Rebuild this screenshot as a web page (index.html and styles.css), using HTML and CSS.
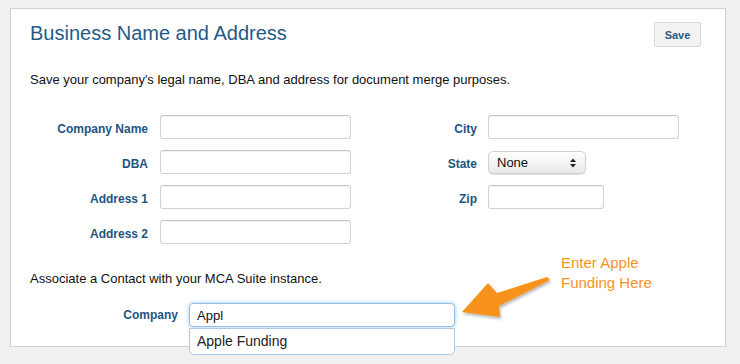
FILE: index.html
```html
<!DOCTYPE html>
<html lang="en">
<head>
<meta charset="utf-8">
<title>Business Name and Address</title>
<link rel="stylesheet" href="styles.css">
</head>
<body>
<div class="card">
  <div class="header">
    <h1 class="title">Business Name and Address</h1>
    <button class="btn-save" type="button">Save</button>
  </div>
  <p class="desc">Save your company's legal name, DBA and address for document merge purposes.</p>

  <div class="form-grid">
    <div class="col col-left">
      <label class="lbl">Company Name</label>
      <input class="txt" type="text">
      <label class="lbl">DBA</label>
      <input class="txt" type="text">
      <label class="lbl">Address 1</label>
      <input class="txt" type="text">
      <label class="lbl">Address 2</label>
      <input class="txt" type="text">
    </div>
    <div class="col col-right">
      <label class="lbl">City</label>
      <input class="txt" type="text">
      <label class="lbl">State</label>
      <div class="select-wrap">
        <select class="sel"><option>None</option></select>
        <svg class="sel-arrows" width="6" height="10" viewBox="0 0 6 10" aria-hidden="true">
          <polygon points="0,4 3,0.5 6,4" fill="#222"/>
          <polygon points="0,6 6,6 3,9.5" fill="#222"/>
        </svg>
      </div>
      <label class="lbl">Zip</label>
      <input class="txt txt-zip" type="text">
    </div>
  </div>

  <p class="desc desc-assoc">Associate a Contact with your MCA Suite instance.</p>

  <div class="company-row">
    <label class="lbl lbl-company">Company</label>
    <div class="ac-wrap">
      <input class="txt txt-focus" type="text" value="Appl">
      <div class="ac-menu">Apple Funding</div>
    </div>
  </div>

  <svg class="callout-arrow" width="100" height="56" viewBox="0 0 100 56" aria-hidden="true">
    <defs>
      <filter id="sh" x="-20%" y="-20%" width="140%" height="160%">
        <feDropShadow dx="1" dy="2" stdDeviation="1.5" flood-color="#000" flood-opacity="0.3"/>
      </filter>
    </defs>
    <polygon filter="url(#sh)" fill="#f7931e"
      points="6,41 32,12 41,22 91,6 94,9 43,35 44,46"/>
  </svg>
  <div class="callout-text">Enter Apple<br>Funding Here</div>
</div>
</body>
</html>
```

FILE: styles.css
```css
* { box-sizing: border-box; }

html, body {
  margin: 0;
  padding: 0;
}

body {
  background: #f1f0f0;
  font-family: "Liberation Sans", Arial, Helvetica, sans-serif;
  color: #111;
  min-height: 100vh;
  padding-top: 8px;
}

.card {
  position: relative;
  margin: 0 0 0 10px;
  width: 716px;
  height: 339px;
  background: #fff;
  border: 1px solid #d3d3d3;
  padding: 12px 24px 0 19px;
}

.header {
  display: flex;
  justify-content: space-between;
  align-items: flex-start;
}

.title {
  margin: 0;
  font-size: 20px;
  line-height: 24px;
  font-weight: normal;
  color: #1f5b86;
}

.btn-save {
  margin-top: 1px;
  width: 47px;
  height: 25px;
  padding: 0;
  background: #f3f3f3;
  border: 1px solid #d9d9d9;
  border-radius: 2px;
  font-family: "Liberation Sans", Arial, sans-serif;
  font-size: 11px;
  font-weight: bold;
  color: #2a5a86;
}

.desc {
  margin: 25px 0 0 0;
  font-size: 13px;
  line-height: 16px;
  color: #111;
}

.form-grid {
  display: flex;
  align-items: flex-start;
  gap: 8px;
  margin-top: 27px;
}

.col {
  display: grid;
  row-gap: 11px;
  align-items: center;
  align-content: start;
}

.col-left {
  grid-template-columns: 118px 191px;
  column-gap: 12px;
}

.col-right {
  grid-template-columns: 118px 191px;
  column-gap: 11px;
}

.lbl {
  display: block;
  text-align: right;
  font-size: 12px;
  font-weight: bold;
  color: #1d557f;
  height: 24px;
  padding-top: 4px;
  line-height: 20px;
}

.txt {
  display: block;
  width: 191px;
  height: 24px;
  margin: 0;
  padding: 0 7px;
  border: 1px solid #d2d2d2;
  border-top-color: #c6c6c6;
  border-radius: 3px;
  background: #fff;
  box-shadow: inset 0 1px 1px rgba(0, 0, 0, 0.06);
  font-family: "Liberation Sans", Arial, sans-serif;
  font-size: 13px;
  color: #111;
  outline: none;
}

.txt-zip { width: 116px; }

.select-wrap {
  position: relative;
  width: 98px;
  height: 23px;
}

.sel {
  -webkit-appearance: none;
  appearance: none;
  display: block;
  width: 98px;
  height: 23px;
  margin: 0;
  padding: 0 0 0 8px;
  border: 1px solid #cfcfcf;
  border-radius: 5px;
  background: linear-gradient(#ffffff, #e9e9e9);
  box-shadow: 0 1px 1px rgba(0, 0, 0, 0.12);
  font-family: "Liberation Sans", Arial, sans-serif;
  font-size: 13px;
  color: #111;
  outline: none;
}

.sel-arrows {
  position: absolute;
  right: 10px;
  top: 7px;
  pointer-events: none;
}

.desc-assoc {
  margin-top: 27px;
}

.company-row {
  display: flex;
  gap: 11px;
  margin-top: 16px;
}

.lbl-company {
  width: 148px;
  padding-top: 0;
  line-height: 24px;
}

.ac-wrap {
  position: relative;
  width: 266px;
  height: 24px;
}

.txt-focus {
  width: 266px;
  border: 1px solid #93bfe6;
  border-radius: 4px;
  box-shadow: 0 0 4px rgba(82, 160, 230, 0.55);
}

.ac-menu {
  position: absolute;
  left: 0;
  top: 25px;
  width: 266px;
  height: 27px;
  padding-left: 7px;
  background: #fff;
  border: 1px solid #a9c8e6;
  border-radius: 0 0 5px 5px;
  font-size: 14px;
  line-height: 25px;
  color: #222;
  z-index: 5;
}

.callout-arrow {
  position: absolute;
  left: 445px;
  top: 262px;
}

.callout-text {
  position: absolute;
  left: 550px;
  top: 244px;
  font-size: 15px;
  line-height: 20px;
  color: #f7931e;
}
```
